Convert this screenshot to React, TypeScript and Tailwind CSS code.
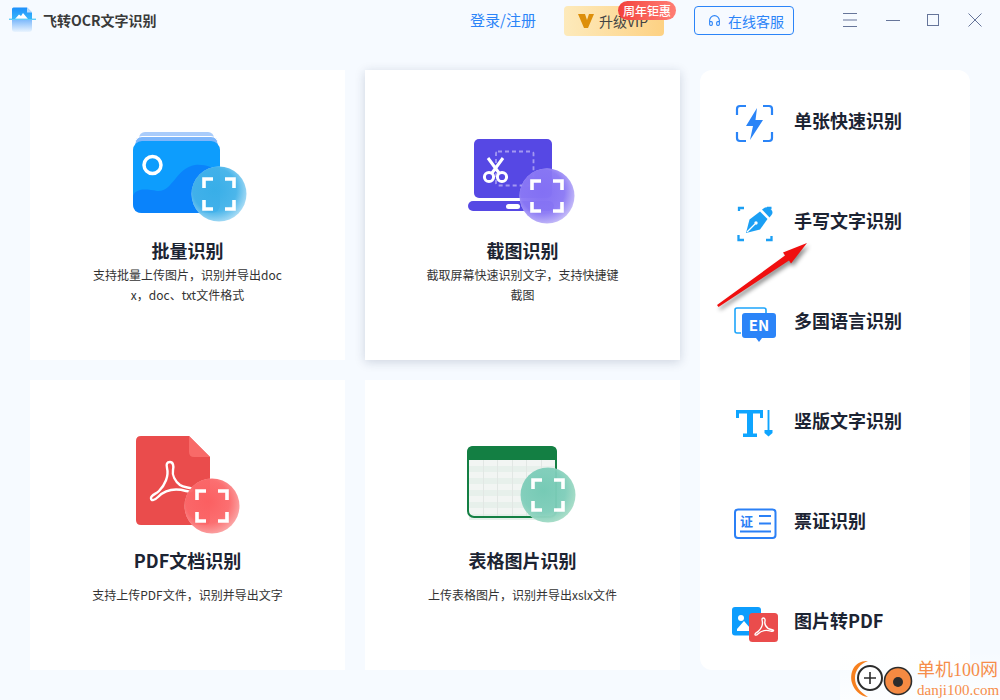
import React from 'react';
import { Headphones } from 'lucide-react';

const ACROBAT =
  'M170 462C173 462 174 466 173 470C172 475 175 481 180 485C184 488 190 487 192 489C193 491 190 492 186 491C175 488 165 490 158 497C154 501 151 501 151 498C151 495 156 494 159 491C165 485 169 476 167 468C166 464 167 462 170 462Z';

// round "scan" lens that sits over each card picture
function Lens({ cx, cy, id, inner, outer }: { cx: number; cy: number; id: string; inner: string; outer: string }) {
  const a = 15;
  const l = 9;
  return (
    <g>
      <defs>
        <radialGradient id={id} cx="0.42" cy="0.42" r="0.72">
          <stop offset="0" stopColor={inner} />
          <stop offset="0.55" stopColor={inner} stopOpacity="0.9" />
          <stop offset="1" stopColor={outer} />
        </radialGradient>
      </defs>
      <circle cx={cx} cy={cy} r="27.5" fill="#fff" fillOpacity="0.55" />
      <circle cx={cx} cy={cy} r="27.5" fill={`url(#${id})`} />
      <path
        d={`M${cx - a} ${cy - a + l}V${cy - a}H${cx - a + l}M${cx + a - l} ${cy - a}H${cx + a}V${cy - a + l}M${cx + a} ${cy + a - l}V${cy + a}H${cx + a - l}M${cx - a + l} ${cy + a}H${cx - a}V${cy + a - l}`}
        fill="none"
        stroke="#fff"
        strokeWidth="3.6"
      />
    </g>
  );
}

function BatchArt() {
  return (
    <svg viewBox="122 125 131 100" className="w-[131px] h-[100px]">
      <rect x="139" y="132" width="75" height="20" rx="6" fill="#a9ccfb" />
      <rect x="135" y="136.5" width="83" height="20" rx="7" fill="#7db6fb" stroke="#fff" strokeWidth="1" />
      <rect x="133" y="141" width="87" height="72" rx="9" fill="#0d9dfd" />
      <path d="M133 196C136 188 146 189 157 191C172 193 176 168 195 165C205 164 214 168 220 172V204Q220 213 211 213H142Q133 213 133 204Z" fill="#0a83fb" />
      <circle cx="152.5" cy="165" r="8.5" fill="none" stroke="#fff" strokeWidth="3.5" />
      <Lens cx={219} cy={194} id="g1" inner="#38aee8" outer="#dcf1fb" />
    </svg>
  );
}

function CaptureArt() {
  return (
    <svg viewBox="457 125 131 100" className="w-[131px] h-[100px]">
      <rect x="474" y="139" width="78" height="59" rx="5" fill="#5648e4" />
      <rect x="468" y="201" width="86" height="10" rx="5" fill="#5648e4" />
      <rect x="506" y="204" width="14" height="5" rx="2.5" fill="#fff" />
      <rect x="496" y="151.5" width="37.5" height="34" rx="2" fill="none" stroke="#a398f1" strokeWidth="1.8" strokeDasharray="4 3" />
      <g fill="none" stroke="#fff" strokeWidth="3">
        <circle cx="489" cy="177" r="4.6" />
        <circle cx="502" cy="177" r="4.6" />
        <path d="M492 173L503 158M499 173L488 158" />
      </g>
      <Lens cx={547} cy={196} id="g2" inner="#8370f4" outer="#e3def9" />
    </svg>
  );
}

function PdfArt() {
  return (
    <svg viewBox="122 435 131 100" className="w-[131px] h-[100px]">
      <path d="M141 436H189L210 457V520Q210 525 205 525H141Q136 525 136 520V441Q136 436 141 436Z" fill="#ea4c4c" />
      <path d="M189 436L210 457H194Q189 457 189 452Z" fill="#f86a68" />
      <path d={ACROBAT} fill="none" stroke="#fff" strokeWidth="2.4" />
      <Lens cx={212} cy={506} id="g3" inner="#fb5f61" outer="#fac4c3" />
    </svg>
  );
}

function TableArt() {
  const rows = [460, 472, 484, 496, 508];
  const cols = [483, 497, 512, 526, 541];
  return (
    <svg viewBox="457 435 131 100" className="w-[131px] h-[100px]">
      <rect x="468" y="447" width="88" height="70" rx="6" fill="#f2f5f3" />
      {rows.map((y) => (
        <rect key={y} x="469" y={y + 6} width="86" height="6" fill="#e7f0eb" />
      ))}
      {cols.map((x) => (
        <rect key={x} x={x} y="460" width="1" height="56" fill="#e2e7e4" />
      ))}
      <rect x="468" y="447" width="88" height="70" rx="6" fill="none" stroke="#137f43" strokeWidth="2" />
      <path d="M473 446H551Q557 446 557 452V460H467V452Q467 446 473 446Z" fill="#137f43" />
      <Lens cx={548} cy={495} id="g4" inner="#76cab5" outer="#c0e6d0" />
    </svg>
  );
}

function FlashIcon() {
  return (
    <svg viewBox="732 96 48 48" className="w-12 h-12">
      <path
        d="M746 106H740Q737 106 737 109V115M763 106H769Q772 106 772 109V115M746 141H740Q737 141 737 138V132M763 141H769Q772 141 772 138V132"
        fill="none"
        stroke="#2a84f7"
        strokeWidth="2.2"
      />
      <path d="M757 108L746 126H753L750 140L763 120H755.5Z" fill="#2a84f7" />
    </svg>
  );
}

function PenIcon() {
  return (
    <svg viewBox="732 196 48 48" className="w-12 h-12">
      <path
        d="M744 208H739V211M767 208H771.5M738.5 235V240H744M766 240H771.5V236"
        fill="none"
        stroke="#1b9ff4"
        strokeWidth="2.3"
      />
      <path d="M746 233L749.5 219.5L760 211.5L767.5 219L760 229.5Z" fill="#1b9ff4" />
      <path d="M762 209.5L765 207.5Q768 206.5 770 208.5L771.5 210Q773.5 212.5 771.5 215L769.5 217.5Z" fill="#1b9ff4" />
      <path d="M747 232L755 224" stroke="#fff" strokeWidth="1.2" />
      <circle cx="756" cy="223" r="1.7" fill="#fff" />
    </svg>
  );
}

function LangIcon() {
  return (
    <svg viewBox="732 296 48 48" className="w-12 h-12">
      <path d="M741 333H737Q735 333 735 331V310Q735 308 737 308H764Q766 308 766 310V313" fill="none" stroke="#1ea5fb" strokeWidth="1.6" />
      <path d="M745 313H773Q776 313 776 316V335Q776 338 773 338H762L759 342L756 338H745Q742 338 742 335V316Q742 313 745 313Z" fill="#2b84f8" />
      <text x="759" y="331" textAnchor="middle" fontSize="15" fontWeight="700" fill="#fff" fontFamily="Noto Sans CJK SC, sans-serif">
        EN
      </text>
    </svg>
  );
}

function VerticalIcon() {
  return (
    <svg viewBox="732 396 48 48" className="w-12 h-12">
      <path d="M736 418V410H763V418H760V413.5H753V433.5H757V437H743V433.5H747V413.5H739V418Z" fill="#0ea5ff" />
      <path d="M768.5 410V432" stroke="#0ea5ff" strokeWidth="1.9" />
      <path d="M764.5 430H772.5V433L768.5 436.5L764.5 433Z" fill="#0ea5ff" />
    </svg>
  );
}

function CertIcon() {
  return (
    <svg viewBox="732 496 48 48" className="w-12 h-12">
      <rect x="735" y="509.5" width="40.5" height="28.5" rx="3" fill="none" stroke="#2b80f6" strokeWidth="2" />
      <text x="746.5" y="526" textAnchor="middle" fontSize="13" fontWeight="700" fill="#2b80f6" fontFamily="Noto Sans CJK SC, sans-serif">
        证
      </text>
      <path d="M759 516H771M759 523.5H771M740 531.5H771" stroke="#2b80f6" strokeWidth="1.8" />
    </svg>
  );
}

function ToPdfIcon() {
  return (
    <svg viewBox="732 596 48 48" className="w-12 h-12">
      <rect x="732" y="607" width="29" height="28.5" rx="3" fill="#0d9dfd" />
      <circle cx="741" cy="618" r="3" fill="#fff" />
      <path d="M737 629L744 621L750 628L751 631H737Z" fill="#fff" />
      <rect x="749" y="613" width="29" height="29" rx="3.5" fill="#ea4c4c" />
      <path
        d={ACROBAT}
        transform="translate(755 618) scale(.45) translate(-151 -462)"
        fill="none"
        stroke="#fff"
        strokeWidth="3"
      />
    </svg>
  );
}

const cards = [
  { title: '批量识别', desc: '支持批量上传图片，识别并导出docx，doc、txt文件格式', art: <BatchArt />, gap: 'mt-[3px]', raised: false },
  { title: '截图识别', desc: '截取屏幕快速识别文字，支持快捷键截图', art: <CaptureArt />, gap: 'mt-[3px]', raised: true },
  { title: 'PDF文档识别', desc: '支持上传PDF文件，识别并导出文字', art: <PdfArt />, gap: 'mt-[13px]', raised: false },
  { title: '表格图片识别', desc: '上传表格图片，识别并导出xslx文件', art: <TableArt />, gap: 'mt-[13px]', raised: false },
];

const tools = [
  { label: '单张快速识别', icon: <FlashIcon /> },
  { label: '手写文字识别', icon: <PenIcon /> },
  { label: '多国语言识别', icon: <LangIcon /> },
  { label: '竖版文字识别', icon: <VerticalIcon /> },
  { label: '票证识别', icon: <CertIcon /> },
  { label: '图片转PDF', icon: <ToPdfIcon /> },
];

export default function App() {
  return (
    <div className="relative w-[1000px] h-[700px] overflow-hidden bg-[#f6faff] font-['Noto_Sans_CJK_SC',sans-serif] text-[#1c2433]">
      {/* Title bar */}
      <header className="flex items-center h-10">
        <div className="flex items-center w-[470px] pl-[9px]">
          <svg viewBox="0 0 28 28" className="w-7 h-7">
            <defs>
              <linearGradient id="lg" x1="0" y1="0" x2="0" y2="1">
                <stop offset="0" stopColor="#1c8ffb" />
                <stop offset="1" stopColor="#38b6fb" />
              </linearGradient>
              <linearGradient id="lg2" x1="0" y1="0" x2="0" y2="1">
                <stop offset="0" stopColor="#7fbafb" />
                <stop offset="1" stopColor="#eaf4fe" />
              </linearGradient>
            </defs>
            <path d="M4.5 1.5H18L23 6.5V13H3V3Q3 1.5 4.5 1.5Z" fill="url(#lg)" />
            <path d="M18 1.5L23 6.5H18Z" fill="#bcdcfb" />
            <path d="M6 13L10 8.5L12 10L14 7L19 13Z" fill="#fff" />
            <rect x="0" y="12.7" width="27" height="1" fill="#22b8f8" />
            <path d="M3 14H23V23Q23 26 20 26H6Q3 26 3 23Z" fill="url(#lg2)" />
          </svg>
          <span className="ml-[6px] text-sm font-semibold text-[#3a3a3a]">飞转OCR文字识别</span>
        </div>
        <a className="w-[94px] text-[15px] text-[#2b84f8]">登录/注册</a>
        <div className="relative flex items-center w-[100px] h-[30px] mt-[1px] pl-[14px] rounded bg-gradient-to-r from-[#fdeabb] to-[#fdd183] text-sm text-[#444]">
          <svg viewBox="0 0 16 16" className="w-4 h-4 mr-[5px]">
            <path d="M0 1H7L9 7L11 1H16L10 15H6Z" fill="#dd8f0a" />
          </svg>
          升级VIP
          <span className="absolute -top-[5px] left-[54px] w-[58px] h-[19px] rounded-[10px] bg-gradient-to-r from-[#f23f3b] to-[#ff7d74] text-xs leading-[19px] text-center font-medium text-white">
            周年钜惠
          </span>
        </div>
        <button className="flex items-center gap-[7px] w-[100px] h-[29px] mt-[1px] ml-[30px] pl-[13px] rounded border border-[#2b84f8] text-sm text-[#2b84f8]">
          <Headphones size={13} strokeWidth={2} />
          在线客服
        </button>
        <div className="flex items-center ml-[49px] text-[#66759a]">
          <svg viewBox="0 0 14 14" className="w-[14px] h-[14px]">
            <path d="M0 .5H14M0 7H14M0 13.5H14" stroke="#66759a" strokeWidth="1" />
          </svg>
          <div className="w-[14px] h-px ml-[29px] bg-[#66759a]" />
          <div className="w-3 h-3 ml-[27px] border border-[#66759a]" />
          <svg viewBox="0 0 14 14" className="w-[14px] h-[14px] ml-[29px]">
            <path d="M.5 .5L13.5 13.5M13.5 .5L.5 13.5" stroke="#66759a" strokeWidth="1" />
          </svg>
        </div>
      </header>

      <main className="flex gap-5 pt-[30px] pl-[30px]">
        <div className="grid grid-cols-[315px_315px] grid-rows-[290px_290px] gap-5">
          {cards.map((c) => (
            <div
              key={c.title}
              className={`flex flex-col items-center pt-[55px] bg-white ${c.raised ? 'shadow-[0_2px_10px_rgba(20,40,80,0.18)]' : ''}`}
            >
              {c.art}
              <h2 className="mt-[13px] text-[18px] leading-6 font-bold text-[#1c2433]">{c.title}</h2>
              <p className={`${c.gap} w-[200px] text-center text-xs leading-5 break-all text-[#333]`}>{c.desc}</p>
            </div>
          ))}
        </div>
        <aside className="grid grid-rows-6 w-[270px] h-[600px] rounded-xl bg-white">
          {tools.map((t) => (
            <div key={t.label} className="flex items-center gap-[14px] pl-8">
              {t.icon}
              <span className="text-[18px] font-bold text-[#1c2433]">{t.label}</span>
            </div>
          ))}
        </aside>
      </main>

      {/* red annotation arrow */}
      <svg viewBox="710 235 105 80" className="absolute left-[710px] top-[235px] w-[105px] h-20 drop-shadow-[2px_3px_2px_rgba(0,0,0,0.45)]">
        <path d="M717 305L785 255.5L783 252.5L807 243L791 263.5L789 260.5L718.5 307Z" fill="#f00f0f" />
      </svg>

      {/* site watermark */}
      <div className="absolute right-0 bottom-0 flex items-end w-[160px] h-[50px] bg-gradient-to-b from-transparent to-[#fcfeff]">
        <svg viewBox="840 650 76 50" className="w-[76px] h-[50px] shrink-0">
          <path d="M868 661C855 660 849 672 852 683C854 690 860 696 868 697C860 692 855 686 855 678C855 670 860 664 868 661Z" fill="#f7801f" />
          <circle cx="870" cy="678" r="12" fill="#fff" stroke="#2c2c2c" strokeWidth="2" />
          <path d="M864 678H876M870 672V684" stroke="#2c2c2c" strokeWidth="1.6" />
          <circle cx="898" cy="681" r="13.5" fill="#f58a42" stroke="#2c2c2c" strokeWidth="1.6" />
          <circle cx="898" cy="682" r="5" fill="#2c2c2c" />
        </svg>
        <div className="flex flex-col ml-[1px] mb-px font-['Liberation_Serif','Noto_Sans_CJK_SC',serif] text-[#f68d4a]">
          <span className="text-[18px] leading-[24px] whitespace-nowrap">单机100网</span>
          <span className="text-[15px] leading-[17px] whitespace-nowrap">danji100.com</span>
        </div>
      </div>
    </div>
  );
}
